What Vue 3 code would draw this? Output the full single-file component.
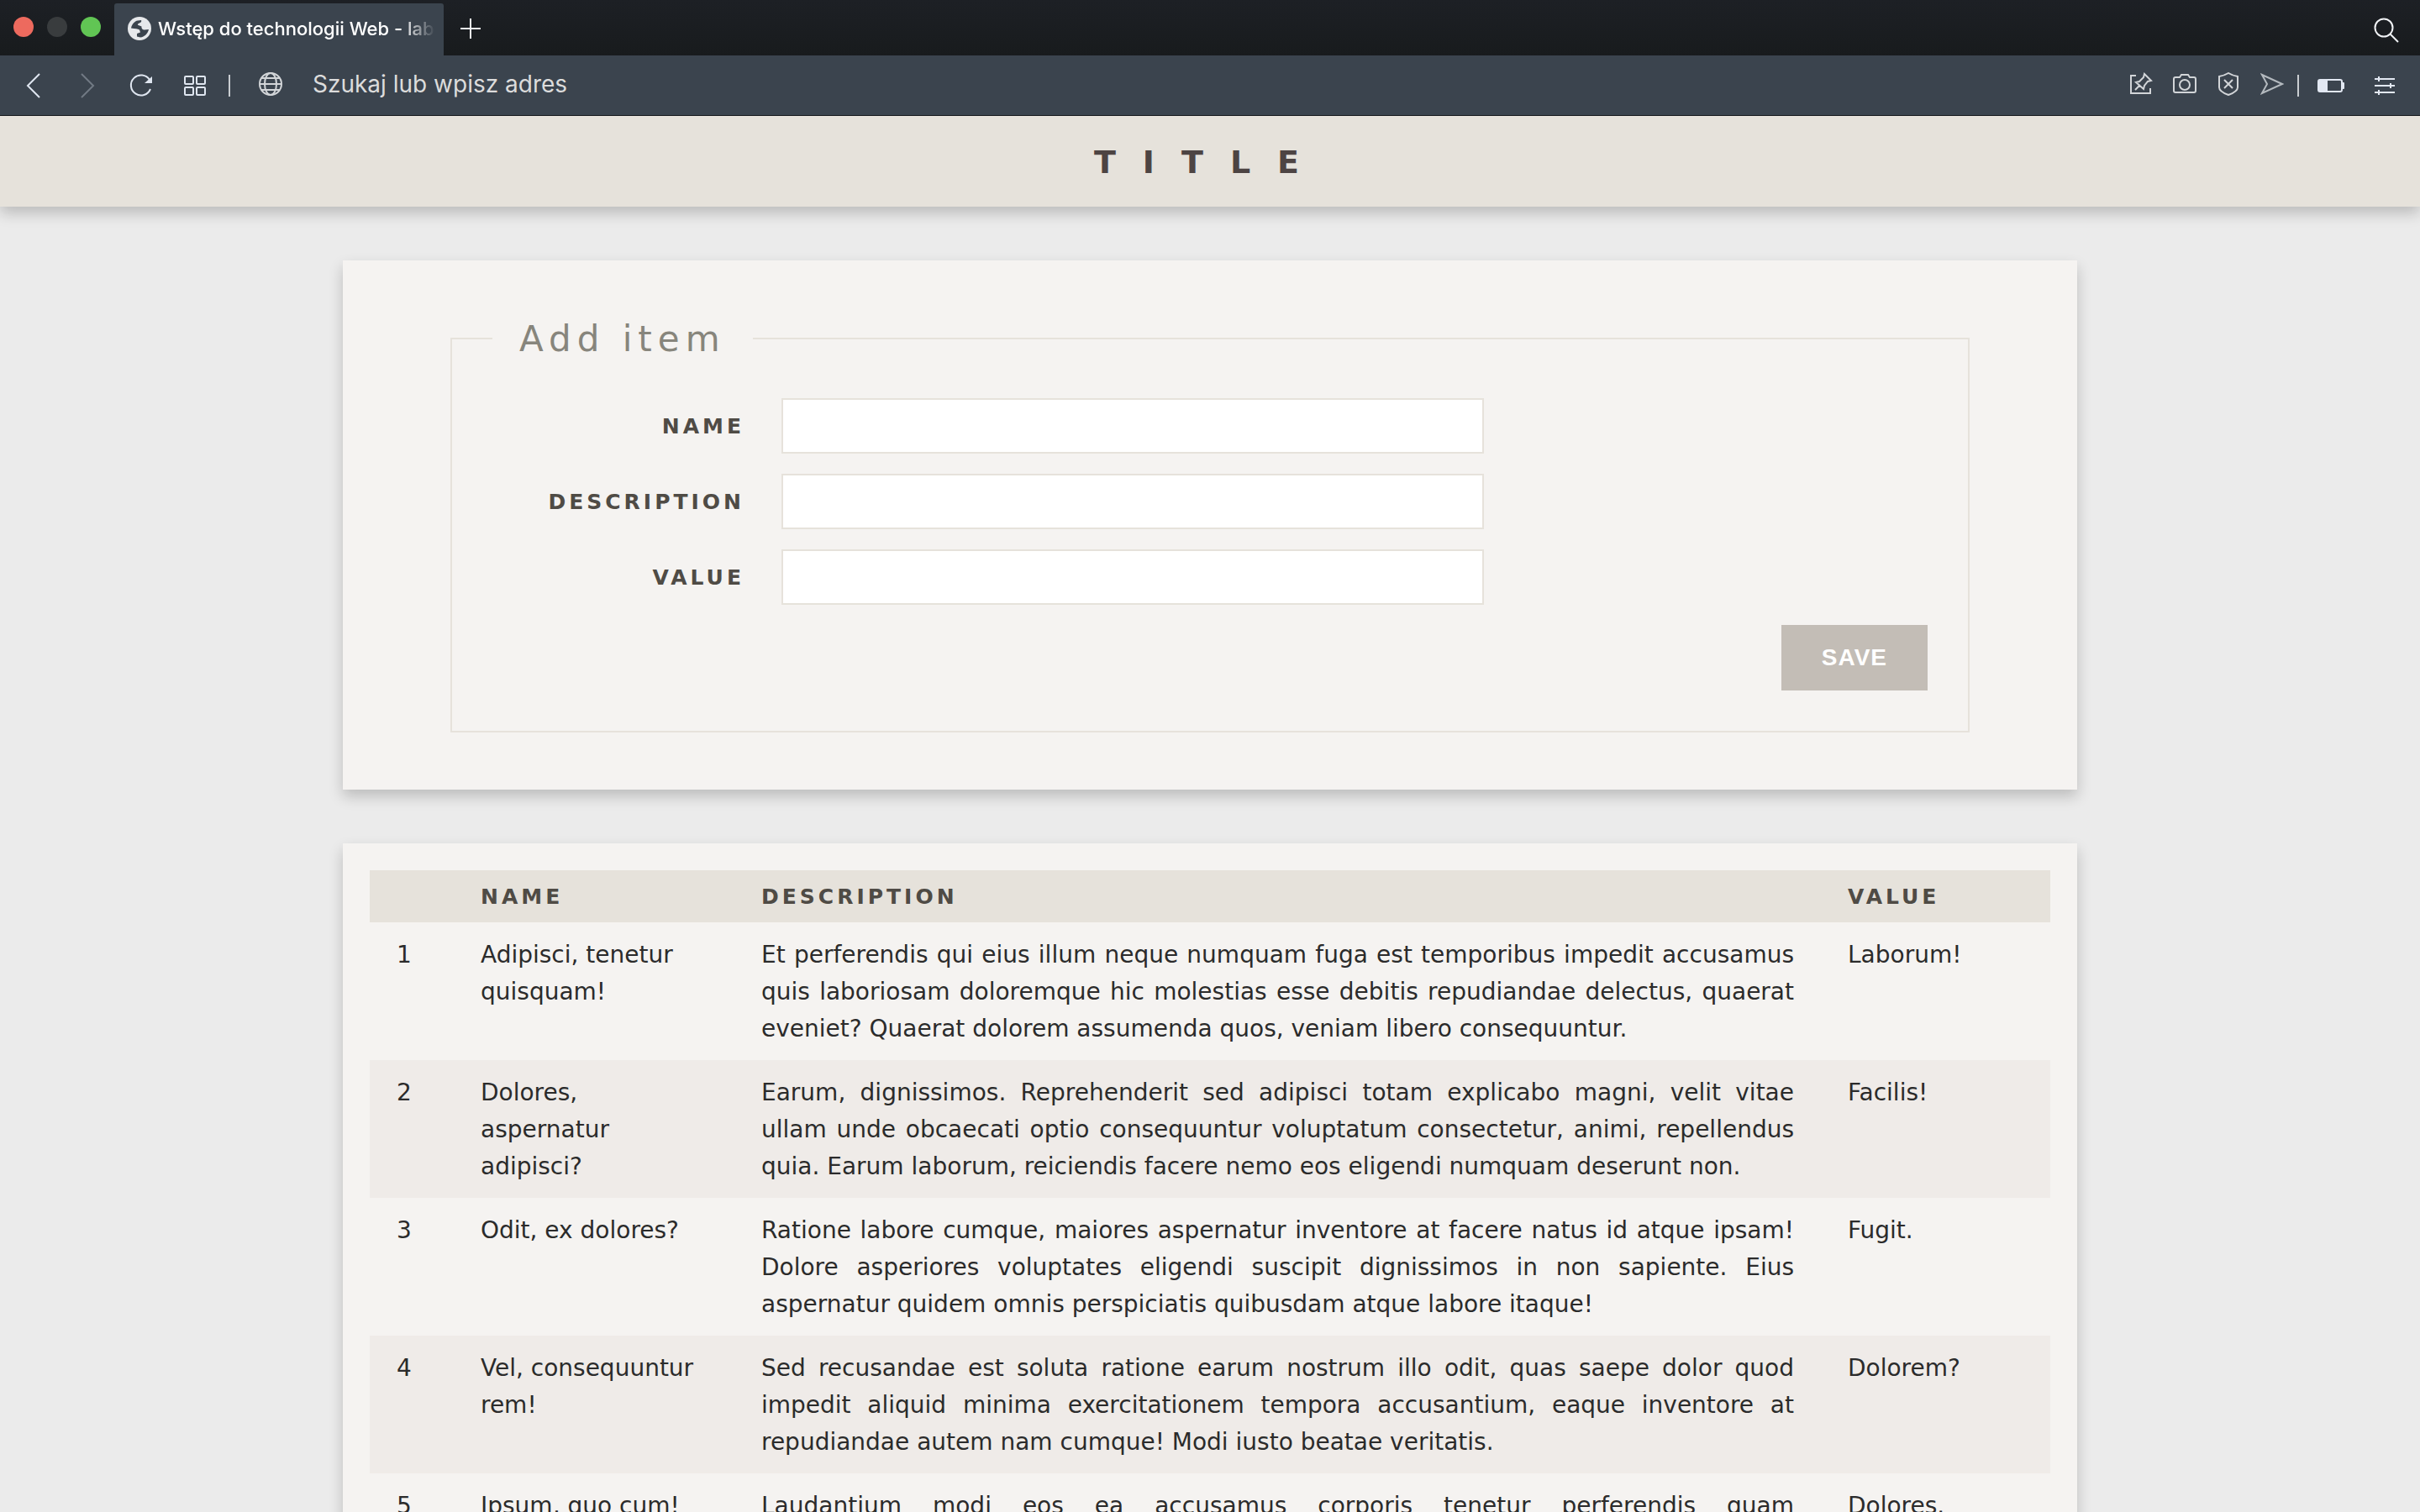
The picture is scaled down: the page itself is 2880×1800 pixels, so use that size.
<script setup>
const fields = [
  { id: 'name', label: 'Name' },
  { id: 'description', label: 'Description' },
  { id: 'value', label: 'Value' },
]

const items = [
  {
    name: 'Adipisci, tenetur quisquam!',
    description:
      'Et perferendis qui eius illum neque numquam fuga est temporibus impedit accusamus quis laboriosam doloremque hic molestias esse debitis repudiandae delectus, quaerat eveniet? Quaerat dolorem assumenda quos, veniam libero consequuntur.',
    value: 'Laborum!',
  },
  {
    name: 'Dolores, aspernatur adipisci?',
    description:
      'Earum, dignissimos. Reprehenderit sed adipisci totam explicabo magni, velit vitae ullam unde obcaecati optio consequuntur voluptatum consectetur, animi, repellendus quia. Earum laborum, reiciendis facere nemo eos eligendi numquam deserunt non.',
    value: 'Facilis!',
  },
  {
    name: 'Odit, ex dolores?',
    description:
      'Ratione labore cumque, maiores aspernatur inventore at facere natus id atque ipsam! Dolore asperiores voluptates eligendi suscipit dignissimos in non sapiente. Eius aspernatur quidem omnis perspiciatis quibusdam atque labore itaque!',
    value: 'Fugit.',
  },
  {
    name: 'Vel, consequuntur rem!',
    description:
      'Sed recusandae est soluta ratione earum nostrum illo odit, quas saepe dolor quod impedit aliquid minima exercitationem tempora accusantium, eaque inventore at repudiandae autem nam cumque! Modi iusto beatae veritatis.',
    value: 'Dolorem?',
  },
  {
    name: 'Ipsum, quo cum!',
    description:
      'Laudantium modi eos ea accusamus corporis tenetur perferendis quam exercitationem.',
    value: 'Dolores.',
  },
]
</script>

<template>
  <div class="window">
    <div class="tabbar">
      <div class="lights">
        <span class="light close"></span>
        <span class="light minimize"></span>
        <span class="light maximize"></span>
      </div>
      <div class="tab">
        <svg class="favicon" viewBox="0 0 28 28" width="28" height="28">
          <circle cx="14" cy="14" r="14" fill="#e6e8eb" />
          <path d="M4 13.500C5 9 8 5 12 4.500L16 4C17 6 15 7 13 8C11 9 12 10 14 10.500L16.500 11.500C16 14 18 15.500 20 15.500L25 15C24 20 20 24 15 24.500L11 23.500L11 20L15 18.500L14 15.500C12 14 9 14.500 4 13.500Z" fill="#3b444e" />
        </svg>
        <span class="tab-title">Wstęp do technologii Web - labo</span>
      </div>
      <button class="icon-button new-tab" type="button" aria-label="New tab">
        <svg viewBox="0 0 24 24" width="24" height="24" stroke="#f0f2f5" stroke-width="2"><path d="M12 0V24M0 12H24" /></svg>
      </button>
      <button class="icon-button search" type="button" aria-label="Search tabs">
        <svg viewBox="0 0 32 32" width="32" height="32" fill="none" stroke="#f0f2f5" stroke-width="2"><circle cx="13" cy="13" r="10.5" /><path d="M20.500 20.500L30 30" /></svg>
      </button>
    </div>

    <div class="toolbar">
      <div class="nav">
        <button class="icon-button" type="button" aria-label="Back">
          <svg viewBox="0 0 32 32" width="32" height="32" fill="none" stroke="#dfe6f0" stroke-width="2"><path d="M23 2L9 16L23 30" /></svg>
        </button>
        <button class="icon-button" type="button" aria-label="Forward">
          <svg viewBox="0 0 32 32" width="32" height="32" fill="none" stroke="#717a84" stroke-width="2"><path d="M9 2L23 16L9 30" /></svg>
        </button>
        <button class="icon-button" type="button" aria-label="Reload">
          <svg viewBox="0 0 32 32" width="32" height="32" fill="none" stroke="#dfe6f0" stroke-width="2"><path d="M26 9A12 12 0 1 0 27 20" /><path d="M29 5V13H20Z" fill="#dfe6f0" stroke="none" /></svg>
        </button>
        <button class="icon-button" type="button" aria-label="Speed dial">
          <svg viewBox="0 0 32 32" width="32" height="32" fill="none" stroke="#dfe6f0" stroke-width="2"><rect x="4" y="5" width="10" height="9" rx="1" /><rect x="18" y="5" width="10" height="9" rx="1" /><rect x="4" y="18" width="10" height="9" rx="1" /><rect x="18" y="18" width="10" height="9" rx="1" /></svg>
        </button>
      </div>
      <span class="divider"></span>
      <svg class="globe" viewBox="0 0 28 28" width="28" height="28" fill="none" stroke="#d2d5d8" stroke-width="2"><circle cx="14" cy="14" r="13" /><ellipse cx="14" cy="14" rx="7" ry="13" /><path d="M1 14H27M3 7H25M3 21H25" /></svg>
      <input class="address" type="text" placeholder="Szukaj lub wpisz adres" aria-label="Szukaj lub wpisz adres" />
      <div class="tools">
        <button class="icon-button" type="button" aria-label="Pin">
          <svg viewBox="0 0 28 28" width="28" height="28" fill="none" stroke="#d2d5d8" stroke-width="2"><path d="M8 4H2V25H25V19M7 21L13 15M8 12L12 11L17 6L18 2L26 10L22 11L18 16L17 20Z" /></svg>
        </button>
        <button class="icon-button" type="button" aria-label="Snapshot">
          <svg viewBox="0 0 28 28" width="28" height="28" fill="none" stroke="#d2d5d8" stroke-width="2"><path d="M3 6H8L10 3H18L20 6H25Q27 6 27 8V22Q27 24 25 24H3Q1 24 1 22V8Q1 6 3 6Z" /><circle cx="14" cy="15" r="6" /></svg>
        </button>
        <button class="icon-button" type="button" aria-label="Ad blocker">
          <svg viewBox="0 0 28 28" width="28" height="28" fill="none" stroke="#d2d5d8" stroke-width="2"><path d="M14 1Q19 4 25 5V18Q25 23 14 27Q3 23 3 18V5Q9 4 14 1ZM9 9L19 19M19 9L9 19" /></svg>
        </button>
        <button class="icon-button" type="button" aria-label="Send">
          <svg viewBox="0 0 28 28" width="28" height="28" fill="none" stroke="#b4babf" stroke-width="2"><path d="M2 3L26 14L2 25L8 14Z" /></svg>
        </button>
      </div>
      <span class="divider"></span>
      <svg class="battery" viewBox="0 0 32 16" width="32" height="16"><rect x="1" y="1" width="28" height="14" rx="2" fill="none" stroke="#e2e8f2" stroke-width="2" /><rect x="1" y="1" width="11" height="14" fill="#e2e8f2" /><rect x="29" y="4" width="3" height="8" rx="1" fill="#e2e8f2" /></svg>
      <button class="icon-button settings" type="button" aria-label="Easy setup">
        <svg viewBox="0 0 24 24" width="24" height="24" stroke="#e2e8f2" stroke-width="2"><path d="M0 4H24M0 12H24M0 20H24M5 1V7M19 9V15M5 17V23" /></svg>
      </button>
    </div>

    <div class="page">
      <header class="banner"><h1>TITLE</h1></header>
      <main>
        <section class="card form-card">
          <form @submit.prevent>
            <fieldset>
              <legend>Add item</legend>
              <div v-for="field in fields" :key="field.id" class="field">
                <label :for="field.id">{{ field.label }}</label>
                <input :id="field.id" type="text" />
              </div>
              <div class="actions"><button class="save" type="submit">SAVE</button></div>
            </fieldset>
          </form>
        </section>

        <section class="card table-card">
          <table>
            <colgroup>
              <col class="col-index" />
              <col class="col-name" />
              <col />
              <col class="col-value" />
            </colgroup>
            <thead>
              <tr>
                <th></th>
                <th scope="col">Name</th>
                <th scope="col">Description</th>
                <th scope="col">Value</th>
              </tr>
            </thead>
            <tbody>
              <tr v-for="(item, index) in items" :key="index">
                <td>{{ index + 1 }}</td>
                <td>{{ item.name }}</td>
                <td class="description">{{ item.description }}</td>
                <td>{{ item.value }}</td>
              </tr>
            </tbody>
          </table>
        </section>
      </main>
    </div>
  </div>
</template>

<style>
body {
  margin: 0;
  background: #ebebeb;
}
</style>

<style scoped>
* {
  box-sizing: border-box;
}

.window {
  display: flex;
  flex-direction: column;
  height: 100vh;
  overflow: hidden;
  font-family: "Verdana", "DejaVu Sans", sans-serif;
  font-size: 28px;
  line-height: 44px;
  color: #2b2b2b;
}

.icon-button {
  display: flex;
  padding: 0;
  border: 0;
  background: none;
}

svg {
  display: block;
  flex: none;
}

.tabbar {
  display: flex;
  flex: none;
  align-items: center;
  height: 66px;
  padding: 0 24px 0 16px;
  background: linear-gradient(#1d2025, #181b1d);
}

.lights {
  display: flex;
  gap: 16px;
  margin-right: 16px;
  padding-bottom: 2px;
}

.light {
  width: 24px;
  height: 24px;
  border-radius: 50%;
}

.close {
  background: #ed6a5e;
}

.minimize {
  background: #393c3e;
}

.maximize {
  background: #61c554;
}

.tab {
  display: flex;
  align-self: flex-end;
  align-items: center;
  gap: 8px;
  width: 392px;
  height: 62px;
  padding: 0 10px 2px 16px;
  border-radius: 3px 3px 0 0;
  background: #3b444e;
}

.tab-title {
  flex: 1;
  overflow: hidden;
  white-space: nowrap;
  font: 500 22px/32px Inter, sans-serif;
  color: #fff;
  mask-image: linear-gradient(to right, #000 88%, transparent);
}

.new-tab {
  margin-left: 20px;
  padding-top: 2px;
}

.search {
  margin-left: auto;
  padding-top: 6px;
}

.toolbar {
  display: flex;
  flex: none;
  align-items: center;
  height: 72px;
  padding: 0 30px 0 24px;
  border-bottom: 1px solid #14171a;
  background: #3b444e;
}

.nav {
  display: flex;
  gap: 32px;
  margin-right: 24px;
}

.divider {
  width: 2px;
  height: 26px;
  background: #c9cdd1;
}

.globe {
  margin: 0 0 4px 34px;
}

.address {
  flex: 1;
  min-width: 0;
  margin: 0 0 4px 36px;
  padding: 0;
  border: 0;
  outline: 0;
  background: none;
  font: 28px/40px Inter, sans-serif;
}

.address::placeholder {
  color: #dcdcdc;
  opacity: 1;
}

.tools {
  display: flex;
  gap: 24px;
  margin: 0 16px 4px 0;
}

.battery {
  margin: 0 36px 0 22px;
}

.page {
  flex: 1;
  min-height: 0;
  overflow: hidden;
  background: #ebebeb;
}

.banner {
  display: flex;
  align-items: center;
  justify-content: center;
  height: 108px;
  padding-top: 2px;
  background: #e6e2db;
  box-shadow: 0 8px 16px rgba(0, 0, 0, 0.2);
}

h1 {
  margin: 0;
  font-size: 38px;
  letter-spacing: 32px;
  color: #4d4443;
}

main {
  display: flex;
  flex-direction: column;
  gap: 64px;
  max-width: 2064px;
  margin: 64px auto;
}

.card {
  background: #f5f3f1;
  box-shadow: 0 8px 16px rgba(0, 0, 0, 0.2);
}

.form-card {
  padding: 68px 128px;
}

fieldset {
  display: flex;
  flex-direction: column;
  gap: 24px;
  margin: 0;
  padding: 46px 48px 48px;
  border: 2px solid #e6e2db;
}

legend {
  padding: 2px 32px 0;
  font-size: 42px;
  line-height: 48px;
  letter-spacing: 7px;
  color: #87857c;
}

.field {
  display: grid;
  grid-template-columns: 300px minmax(0, 836px);
  gap: 44px;
  align-items: center;
}

label,
th {
  font-size: 25px;
  line-height: 30px;
  font-weight: 700;
  letter-spacing: 4px;
  text-transform: uppercase;
  color: #4f4b45;
}

label {
  padding-top: 2px;
  text-align: right;
}

.field input {
  height: 66px;
  padding: 0 16px;
  border: 2px solid #e6e2db;
  border-radius: 0;
  outline: 0;
  background: #fff;
  font: inherit;
}

.actions {
  display: flex;
  justify-content: flex-end;
}

.save {
  height: 78px;
  padding: 0 48px;
  border: 0;
  background: #c3bdb6;
  font: 700 28px/32px "Liberation Sans", Arial, sans-serif;
  letter-spacing: 1px;
  color: #fff;
}

.table-card {
  padding: 32px;
}

table {
  width: 100%;
  border-collapse: collapse;
  table-layout: fixed;
}

.col-index {
  width: 5%;
}

.col-name {
  width: 334px;
}

.col-value {
  width: 273px;
}

th,
td {
  padding: 17px 32px 15px;
  text-align: left;
  vertical-align: top;
}

th {
  background: #e6e2db;
}

tbody tr:nth-child(even) {
  background: #efebe8;
}

.description {
  text-align: justify;
}
</style>
